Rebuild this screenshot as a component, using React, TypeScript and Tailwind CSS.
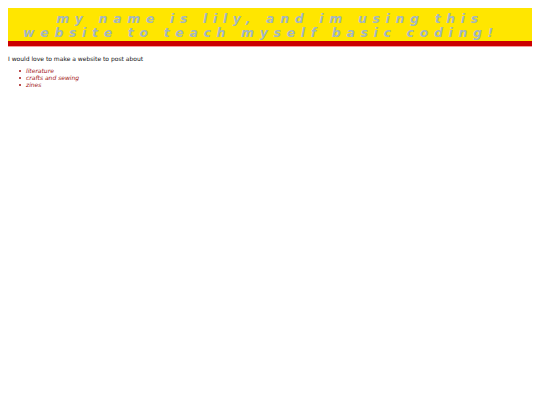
export default function App() {
  const items = ["literature", "crafts and sewing", "zines"];
  return (
    <div className="min-h-[405px] bg-white p-2" style={{ fontFamily: '"DejaVu Sans", Verdana, sans-serif' }}>
      <div className="bg-[#ffe600] pt-[4px] pb-[1px] text-center">
        <div className="text-[12.5px] leading-[14px] font-bold italic tracking-[5.65px] text-[#a3b6c2]">
          <div className="pl-[0px]">my name is lily, and im using this</div>
          <div className="pr-[18px]">website to teach myself basic coding!</div>
        </div>
      </div>
      <div className="h-[6px] bg-[#cc0000] border-b border-[#f59a9a]" />
      <p className="mt-[7px] text-[6px] leading-[9px] text-[#111]">I would love to make a website to post about</p>
      <ul className="mt-[4px] pl-[11px] text-[6px] leading-[7px] italic text-[#a31515]">
        {items.map((t) => (
          <li key={t} className="flex items-center">
            <span className="mr-[5px] inline-block h-[2px] w-[2px] rounded-full bg-[#a31515]" />
            <span>{t}</span>
          </li>
        ))}
      </ul>
    </div>
  );
}
